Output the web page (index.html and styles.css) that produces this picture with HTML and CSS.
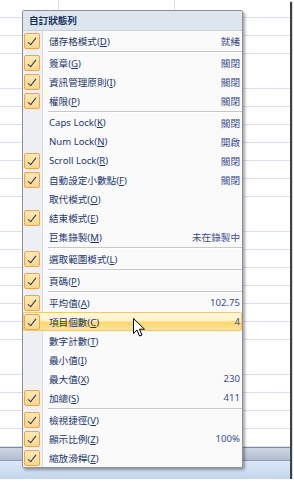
FILE: index.html
```html
<!DOCTYPE html>
<html lang="zh-Hant">
<head>
  <meta charset="UTF-8">
  <title>自訂狀態列</title>
  <link rel="stylesheet" href="styles.css">
</head>
<body>
<div class="shot">
  <div class="sheet"></div>
  <div class="statusbar"></div>

  <div class="menu">
    <div class="menu-title">自訂狀態列</div>
    <div class="menu-body">
      <div class="item"><span class="check on"></span><span class="label">儲存格模式(<u>D</u>)</span><span class="value">就緒</span></div>
      <div class="sep"></div>
      <div class="item"><span class="check on"></span><span class="label">簽章(<u>G</u>)</span><span class="value">關閉</span></div>
      <div class="item"><span class="check on"></span><span class="label">資訊管理原則(<u>I</u>)</span><span class="value">關閉</span></div>
      <div class="item"><span class="check on"></span><span class="label">權限(<u>P</u>)</span><span class="value">關閉</span></div>
      <div class="sep"></div>
      <div class="item"><span class="check"></span><span class="label">Caps Lock(<u>K</u>)</span><span class="value">關閉</span></div>
      <div class="item"><span class="check"></span><span class="label">Num Lock(<u>N</u>)</span><span class="value">開啟</span></div>
      <div class="item"><span class="check on"></span><span class="label">Scroll Lock(<u>R</u>)</span><span class="value">關閉</span></div>
      <div class="item"><span class="check on"></span><span class="label">自動設定小數點(<u>F</u>)</span><span class="value">關閉</span></div>
      <div class="item"><span class="check"></span><span class="label">取代模式(<u>O</u>)</span></div>
      <div class="item"><span class="check on"></span><span class="label">結束模式(<u>E</u>)</span></div>
      <div class="item"><span class="check"></span><span class="label">巨集錄製(<u>M</u>)</span><span class="value">未在錄製中</span></div>
      <div class="sep"></div>
      <div class="item"><span class="check on"></span><span class="label">選取範圍模式(<u>L</u>)</span></div>
      <div class="sep"></div>
      <div class="item"><span class="check on"></span><span class="label">頁碼(<u>P</u>)</span></div>
      <div class="sep"></div>
      <div class="item"><span class="check on"></span><span class="label">平均值(<u>A</u>)</span><span class="value">102.75</span></div>
      <div class="item hot"><span class="check on"></span><span class="label">項目個數(<u>C</u>)</span><span class="value">4</span></div>
      <div class="item"><span class="check"></span><span class="label">數字計數(<u>T</u>)</span></div>
      <div class="item"><span class="check"></span><span class="label">最小值(<u>I</u>)</span></div>
      <div class="item"><span class="check"></span><span class="label">最大值(<u>X</u>)</span><span class="value">230</span></div>
      <div class="item"><span class="check on"></span><span class="label">加總(<u>S</u>)</span><span class="value">411</span></div>
      <div class="sep"></div>
      <div class="item"><span class="check on"></span><span class="label">檢視捷徑(<u>V</u>)</span></div>
      <div class="item"><span class="check on"></span><span class="label">顯示比例(<u>Z</u>)</span><span class="value">100%</span></div>
      <div class="item"><span class="check on"></span><span class="label">縮放滑桿(<u>Z</u>)</span></div>
    </div>
  </div>

  <svg class="cursor" width="13" height="20" viewBox="0 0 13 20">
    <path d="M0.5 0.5 L0.5 15.5 L4 12 L6.5 18 L9 17 L6.5 11.2 L11.5 11.2 Z" fill="#fff" stroke="#000" stroke-width="1"/>
  </svg>
</div>
</body>
</html>
```

FILE: styles.css
```css
body {
  margin: 0;
  background: #fff;
}

.shot {
  position: relative;
  width: 290px;
  height: 479px;
  display: flex;
  flex-direction: column;
  box-shadow: 2px 2px 1px rgba(30, 30, 30, 0.85);
  overflow: visible;
}

.sheet {
  flex: 1;
  background-color: #fff;
  background-image:
    repeating-linear-gradient(to bottom, transparent 0 16.875px, #d9e1ec 16.875px 17.875px),
    repeating-linear-gradient(to right, transparent 0 58px, #d9e1ec 58px 59px, transparent 59px 116px);
}

.statusbar {
  height: 31px;
  border-top: 1px solid #7d8ca5;
  background: linear-gradient(to bottom, #cdd6e3 0, #b2bfd2 12px, #8c9bb3 12px, #8c9bb3 13px, #dde8f7 13px, #c3d5ed 100%);
}

.menu {
  position: absolute;
  left: 22px;
  top: 10px;
  width: 219px;
  border: 1px solid #8e9092;
  border-radius: 2px;
  background: #fafafa;
  box-shadow: 2px 2px 3px rgba(0, 0, 0, 0.35);
  font-family: "Noto Sans", "Noto Sans CJK TC", sans-serif;
  font-size: 9.6px;
}

.menu-title {
  height: 19px;
  line-height: 19px;
  padding-left: 6px;
  background: #dde6ee;
  border-bottom: 1px solid #c8d0d8;
  color: #15325f;
  font-weight: bold;
}

.menu-body {
  background: linear-gradient(to right, #eef0f3 0, #eef0f3 19px, #d9dde2 19px, #d9dde2 20px, #fafafa 20px);
}

.item {
  display: flex;
  align-items: center;
  height: 19px;
  color: #22366a;
}

.item.hot {
  border-radius: 2px;
  background: linear-gradient(to bottom, #fffae4 0, #fff1c2 45%, #fdd86f 55%, #fde39a 100%);
  box-shadow: inset 0 0 0 1px #f0c878;
}

.check {
  position: relative;
  width: 16px;
  height: 16px;
  margin-left: 1px;
  box-sizing: border-box;
  flex: none;
}

.check.on {
  border: 1px solid #f1a24e;
  border-radius: 2px;
  background: linear-gradient(to bottom, #fee9b6, #fcd88a);
}

.check.on::after {
  content: "";
  position: absolute;
  left: 5px;
  top: 2px;
  width: 3px;
  height: 8px;
  border-right: 1.5px solid #1b2b63;
  border-bottom: 1.5px solid #1b2b63;
  transform: rotate(38deg);
}

.label {
  margin-left: 9px;
  white-space: nowrap;
}

.value {
  margin-left: auto;
  padding-right: 2px;
  color: #3a4b8d;
  white-space: nowrap;
}

.sep {
  height: 1px;
  margin: 1px 0 0 25px;
  background: #c7c7c7;
  border-bottom: 1px solid #fff;
}

.cursor {
  position: absolute;
  left: 133px;
  top: 318px;
}
```
